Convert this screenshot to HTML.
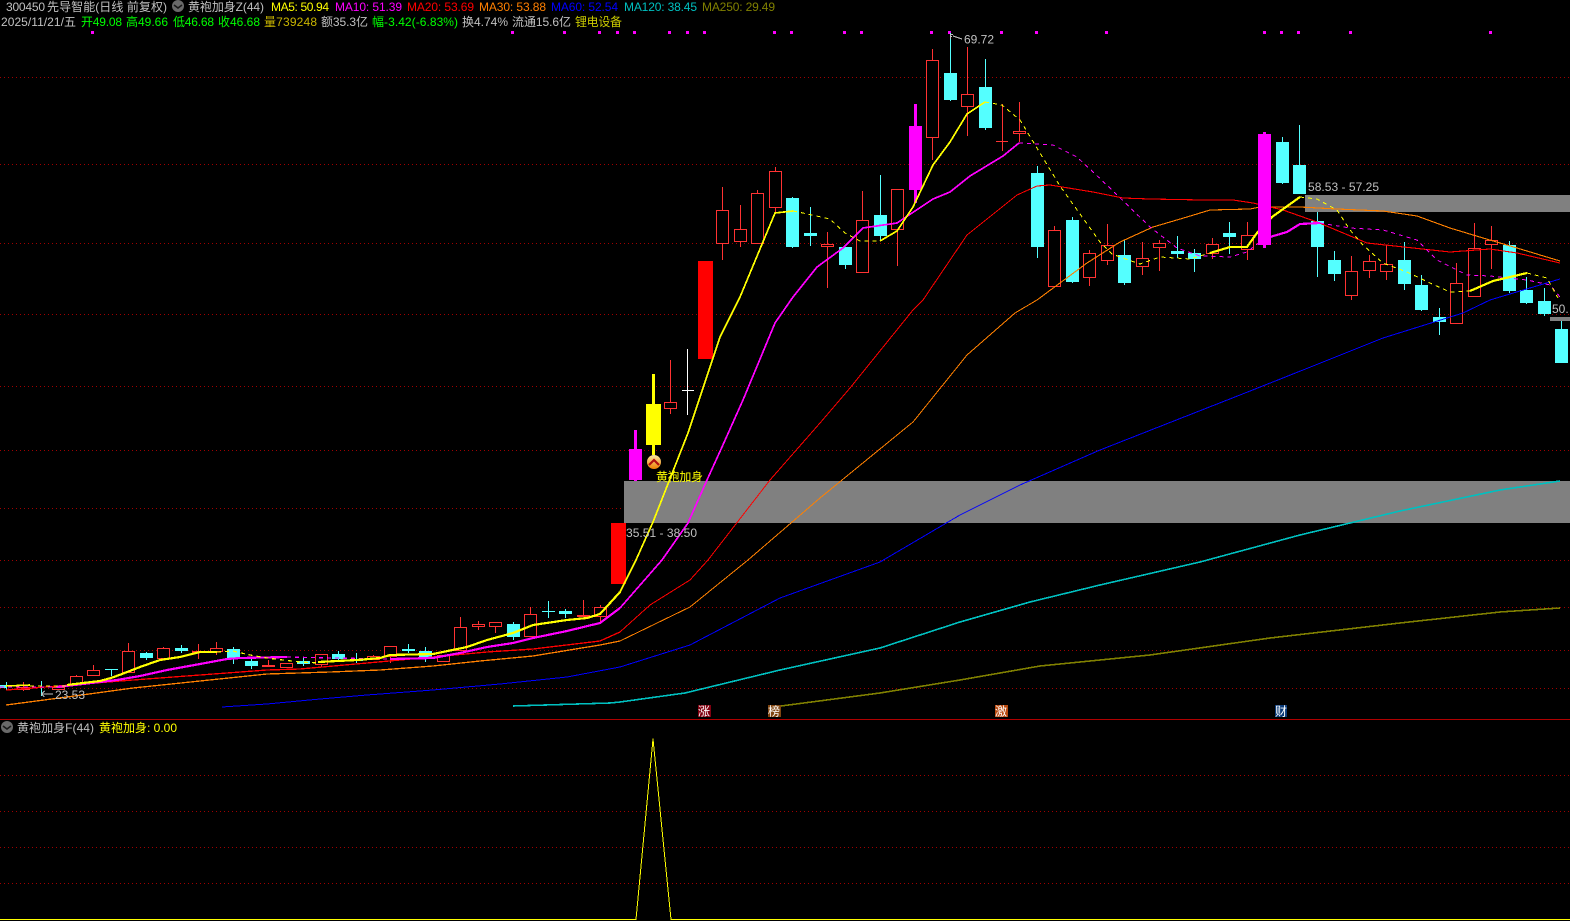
<!DOCTYPE html>
<html>
<head>
<meta charset="utf-8">
<style>
html,body{margin:0;padding:0;background:#000;width:1570px;height:921px;overflow:hidden}
svg{display:block;position:absolute;left:0;top:0}
text{font-family:"Liberation Sans","WenQuanYi Zen Hei","Noto Sans CJK SC",sans-serif;font-size:12px;fill:#c0c0c0}
.l{fill:none;shape-rendering:crispEdges;stroke-linejoin:round}
</style>
</head>
<body>
<svg width="1570" height="921" viewBox="0 0 1570 921" xmlns="http://www.w3.org/2000/svg">
<defs>
<linearGradient id="g" x1="0" y1="0" x2="0" y2="1"><stop offset="0" stop-color="#f8e8a0"/><stop offset="1" stop-color="#f08000"/></linearGradient>
</defs>
<rect width="1570" height="921" fill="#000"/>

<!-- grid -->
<g stroke="#a00000" stroke-width="1" stroke-dasharray="1 3" shape-rendering="crispEdges">
<path d="M0 77.5H1570M0 164.5H1570M0 243.5H1570M0 314.5H1570M0 386.5H1570M0 450.5H1570M0 508.5H1570M0 560.5H1570M0 607.5H1570M0 650.5H1570M0 688.5H1570"/>
<path d="M0 775.5H1570M0 811.5H1570M0 847.5H1570M0 883.5H1570"/>
</g>
<rect x="0" y="719" width="1570" height="1" fill="#b00000"/>

<!-- top magenta dots -->
<g fill="#ff00ff">
<rect x="91" y="31" width="3" height="3"/><rect x="511" y="31" width="3" height="3"/><rect x="563" y="31" width="3" height="3"/><rect x="598" y="31" width="3" height="3"/><rect x="616" y="31" width="3" height="3"/><rect x="633" y="31" width="3" height="3"/><rect x="668" y="31" width="3" height="3"/><rect x="686" y="31" width="3" height="3"/><rect x="703" y="31" width="3" height="3"/><rect x="773" y="31" width="3" height="3"/><rect x="790" y="31" width="3" height="3"/><rect x="843" y="31" width="3" height="3"/><rect x="860" y="31" width="3" height="3"/><rect x="930" y="31" width="3" height="3"/><rect x="948" y="31" width="3" height="3"/><rect x="1000" y="31" width="3" height="3"/><rect x="1035" y="31" width="3" height="3"/><rect x="1105" y="31" width="3" height="3"/><rect x="1263" y="31" width="3" height="3"/><rect x="1280" y="31" width="3" height="3"/><rect x="1297" y="31" width="3" height="3"/><rect x="1349" y="31" width="3" height="3"/><rect x="1489" y="31" width="3" height="3"/>
</g>

<!-- red hollow candles -->
<path fill="#000" stroke="#ff3232" stroke-width="1" shape-rendering="crispEdges" d="
M17.5 687.5h12v2h-12zM23.5 682V687M23.5 690V691
M52.5 687.5h12v2h-12z
M70.5 676.5h12v8h-12zM76.5 675V676
M87.5 670.5h12v5h-12zM93.5 665V670
M122.5 651.5h12v21h-12zM128.5 643V651
M157.5 648.5h12v10h-12zM163.5 647V648
M192.5 651.5h12v1h-12zM198.5 644V651M198.5 653V659
M210.5 648.5h12v3h-12zM216.5 642V648M216.5 652V655
M262.5 665.5h12v1h-12zM268.5 660V665
M280.5 663.5h12v4h-12z
M315.5 654.5h12v10h-12zM321.5 665V667
M367.5 656.5h12v3h-12zM373.5 655V656
M384.5 646.5h12v10h-12zM390.5 657V663
M437.5 655.5h12v6h-12z
M454.5 627.5h12v23h-12zM460.5 617V627
M472.5 624.5h12v2h-12zM478.5 621V624M478.5 627V630
M489.5 622.5h12v4h-12zM495.5 627V633
M524.5 614.5h12v22h-12zM530.5 607V614
M577.5 615.5h12v1h-12zM583.5 600V615
M594.5 607.5h12v9h-12zM600.5 605V607M600.5 617V622
M664.5 402.5h12v6h-12zM670.5 360V402M670.5 409V414
M716.5 210.5h12v33h-12zM722.5 187V210M722.5 244V260
M734.5 229.5h12v12h-12zM740.5 205V229M740.5 242V247
M751.5 193.5h12v50h-12zM757.5 190V193
M769.5 171.5h12v36h-12zM775.5 167V171M775.5 208V213
M821.5 244.5h12v2h-12zM827.5 232V244M827.5 247V288
M856.5 220.5h12v52h-12zM862.5 191V220
M891.5 189.5h12v40h-12zM897.5 230V266
M926.5 60.5h12v77h-12zM932.5 49V60M932.5 138V160
M961.5 94.5h12v12h-12zM967.5 47V94M967.5 107V136
M996 141.5h12M1002.5 104V151
M1013.5 131.5h12v2h-12zM1019.5 102V131M1019.5 134V142
M1048.5 230.5h12v56h-12zM1054.5 226V230
M1083.5 253.5h12v24h-12zM1089.5 250V253M1089.5 278V286
M1101.5 245.5h12v15h-12zM1107.5 224V245M1107.5 261V265
M1136.5 258.5h12v8h-12zM1142.5 242V258M1142.5 267V275
M1153.5 243.5h12v4h-12zM1159.5 240V243M1159.5 248V271
M1206.5 244.5h12v9h-12zM1212.5 238V244M1212.5 254V259
M1241.5 235.5h12v14h-12zM1247.5 222V235M1247.5 250V260
M1345.5 271.5h12v24h-12zM1351.5 256V271M1351.5 296V300
M1363.5 261.5h12v9h-12zM1369.5 255V261M1369.5 271V278
M1380.5 264.5h12v7h-12zM1386.5 245V264M1386.5 272V280
M1450.5 283.5h12v40h-12zM1456.5 263V283
M1468.5 248.5h12v48h-12zM1474.5 223V248
M1485.5 240.5h12v4h-12zM1491.5 226V240M1491.5 245V269
"/>

<!-- cyan candles -->
<path fill="#54ffff" stroke="#54ffff" stroke-width="1" shape-rendering="crispEdges" d="
M0.5 685.5h6v2h-6zM6.5 682V690
M41.5 681V696
M105 669.5h13M111.5 669V676
M140.5 653.5h12v4h-12zM146.5 652V660
M175.5 648.5h12v2h-12zM181.5 645V653
M227.5 649.5h12v8h-12zM233.5 647V664
M245.5 661.5h12v4h-12zM251.5 659V669
M297.5 661.5h12v2h-12zM303.5 657V666
M332.5 654.5h12v4h-12zM338.5 651V662
M350.5 659.5h12v1h-12zM356.5 653V663
M402.5 649.5h12v1h-12zM408.5 644V653
M419.5 651.5h12v5h-12zM425.5 647V662
M507.5 624.5h12v12h-12zM513.5 622V640
M542 611.5h13M548.5 601V618
M559.5 611.5h12v2h-12zM565.5 609V618
M786.5 198.5h12v48h-12zM792.5 197V248
M804.5 233.5h12v2h-12zM810.5 207V246
M839.5 247.5h12v17h-12zM845.5 265V269
M874.5 215.5h12v20h-12zM880.5 175V240
M944.5 73.5h12v26h-12zM950.5 33V101
M979.5 87.5h12v40h-12zM985.5 59V130
M1031.5 173.5h12v73h-12zM1037.5 166V258
M1066.5 220.5h12v61h-12zM1072.5 217V283
M1118.5 255.5h12v27h-12zM1124.5 240V285
M1171.5 251.5h12v2h-12zM1177.5 236V258
M1188.5 253.5h12v5h-12zM1194.5 249V272
M1223.5 233.5h12v3h-12zM1229.5 222V254
M1276.5 142.5h12v40h-12zM1282.5 137V184
M1293.5 165.5h12v28h-12zM1299.5 125V194
M1311.5 221.5h12v25h-12zM1317.5 212V277
M1328.5 260.5h12v13h-12zM1334.5 251V281
M1398.5 260.5h12v23h-12zM1404.5 242V290
M1415.5 285.5h12v24h-12zM1421.5 275V311
M1433.5 317.5h12v4h-12zM1439.5 308V335
M1503.5 245.5h12v45h-12zM1509.5 241V293
M1520.5 290.5h12v12h-12zM1526.5 277V304
M1538.5 301.5h12v12h-12zM1544.5 288V316
M1555.5 329.5h12v33h-12zM1561.5 321V329
"/>

<!-- solid candles -->
<rect x="611" y="523" width="15" height="61" fill="#ff0000"/>
<rect x="698" y="261" width="15" height="98" fill="#ff0000"/>
<path d="M687.5 349V415M682 390.5H694" stroke="#fff" fill="none" shape-rendering="crispEdges"/>
<rect x="629" y="449" width="13" height="31" fill="#ff00ff"/><rect x="634" y="430" width="3" height="51" fill="#ff00ff"/>
<rect x="646" y="404" width="15" height="41" fill="#ffff00"/><rect x="652" y="374" width="3" height="81" fill="#ffff00"/>
<rect x="909" y="126" width="13" height="64" fill="#ff00ff"/><rect x="914" y="104" width="3" height="99" fill="#ff00ff"/>

<!-- bands -->
<rect x="624" y="481" width="946" height="42" fill="#808080"/>
<rect x="1305" y="195" width="265" height="17" fill="#808080"/>
<rect x="1550" y="317" width="20" height="4" fill="#808080"/>

<!-- MA250 / MA120 / MA60 -->
<polyline class="l" stroke="#808000" stroke-width="1.6" points="781,706 880,693 960,680 1040,666 1150,655 1270,638 1400,623 1500,612 1560,608"/>
<polyline class="l" stroke="#00c0c0" stroke-width="1.6" points="513,706 610,703 620,702 685,693 780,670 880,648 960,622 1030,602 1100,585 1200,562 1300,535 1400,511 1500,490 1560,481"/>
<polyline class="l" stroke="#0000ff" stroke-width="1" points="222,707 267,704 320,699 367,695 433,690 500,684 567,677 620,667 690,645 780,598 880,562 960,515 1020,485 1100,450 1240,395 1303,370 1383,338 1463,313 1490,300 1560,279"/>

<!-- MA30 -->
<polyline class="l" stroke="#ff8000" stroke-width="1.3" points="6,705 67,697 133,688 200,681 267,674 330,672 380,670 433,666 480,661 533,656 600,645 620,641"/>
<polyline class="l" stroke="#ff8000" stroke-width="1" points="620,641 690,607 748,560 820,498 913,422 967,355 1015,313 1037,300"/>
<polyline class="l" stroke="#ff8000" stroke-width="1.1" points="1037,300 1087,263 1120,242 1153,227 1187,217 1210,210 1250,209 1260,207 1300,207 1337,209 1383,211 1417,216 1450,228 1483,238 1517,248 1560,261"/>

<!-- MA20 -->
<polyline class="l" stroke="#ff0000" stroke-width="1.3" points="6,690 33,688 133,680 200,675 267,670 300,669 367,663 433,657 487,652 533,649 600,641 620,632"/>
<polyline class="l" stroke="#ff0000" stroke-width="1" points="620,632 650,605 690,580 708,560 770,480 820,423 850,388 913,310 923,300 967,235 1017,195 1037,186"/>
<polyline class="l" stroke="#ff0000" stroke-width="1.1" points="1037,186 1050,185 1093,192 1123,198 1150,199 1203,200 1233,200 1253,203 1283,210 1317,222 1367,243 1450,252 1490,249 1517,253 1560,263"/>

<!-- MA10 -->
<g stroke="#ff00ff">
<polyline class="l" stroke-width="1.2" stroke-dasharray="4 4" points="0,687 57,687"/>
<polyline class="l" stroke-width="2.2" points="57,687 83,684 117,680 140,676 167,670 200,664 227,659 240,658 287,657"/>
<polyline class="l" stroke-width="1.2" stroke-dasharray="4 4" points="287,657 335,658 390,659"/>
<polyline class="l" stroke-width="2.2" points="390,659 433,658 460,653 487,647 513,643 533,638 567,631 600,623 620,608"/>
<polyline class="l" stroke-width="1.7" points="620,608 662,560 688,523 707,480 722,447 743,400 775,323 793,297 817,267 843,248 863,228 897,223 933,199 950,192 970,176 1003,156 1019,143"/>
<polyline class="l" stroke-width="1" stroke-dasharray="4 4" points="1019,143 1053,145 1077,157 1110,188 1150,227 1177,248 1200,256 1230,257 1247,252 1260,242"/>
<polyline class="l" stroke-width="2.2" points="1260,242 1270,237 1287,232 1300,224 1320,223"/>
<polyline class="l" stroke-width="1" stroke-dasharray="4 4" points="1320,223 1350,228 1383,230 1417,240 1437,260 1467,275 1490,276 1527,280 1550,285 1560,297"/>
</g>

<!-- MA5 -->
<g stroke="#ffff00">
<polyline class="l" stroke-width="1.6" points="6,686 30,685"/>
<polyline class="l" stroke-width="1.2" stroke-dasharray="4 4" points="30,686 67,686"/>
<polyline class="l" stroke-width="2.2" points="67,685 83,683 100,681 111,678 122,674 140,667 160,660 180,657 200,652 217,652"/>
<polyline class="l" stroke-width="1.2" stroke-dasharray="4 4" points="217,652 233,651 250,655 267,658 283,660 300,662 320,663"/>
<polyline class="l" stroke-width="2.2" points="318,662 357,660 380,658 390,655 433,654 467,647 487,640 513,633 533,625 567,620 587,618 600,614 620,592"/>
<polyline class="l" stroke-width="1.7" points="620,592 636,560 653,522 688,433 720,337 740,297 775,213 793,211"/>
<polyline class="l" stroke-width="1" stroke-dasharray="4 4" points="793,211 803,213 830,219 845,233 860,241 880,241"/>
<polyline class="l" stroke-width="1.7" points="880,241 897,231 913,207 933,165 950,142 967,114 985,102"/>
<polyline class="l" stroke-width="1" stroke-dasharray="4 4" points="985,102 1002,105 1020,120 1040,153 1060,186 1100,242 1112,254 1120,257 1140,264 1160,257 1190,259 1210,253"/>
<polyline class="l" stroke-width="2.2" points="1210,253 1230,247 1247,247 1257,233 1272,217 1300,197"/>
<polyline class="l" stroke-width="1" stroke-dasharray="4 4" points="1300,197 1317,199 1337,210 1350,230 1363,245 1383,263 1407,272 1430,283 1450,292 1470,291"/>
<polyline class="l" stroke-width="2.2" points="1470,291 1493,281 1527,273"/>
<polyline class="l" stroke-width="1" stroke-dasharray="4 4" points="1527,273 1547,278 1558,298"/>
</g>

<!-- magenta tall candle on top of lines -->
<rect x="1258" y="134" width="13" height="111" fill="#ff00ff"/><rect x="1263" y="132" width="3" height="116" fill="#ff00ff"/>

<!-- signal icon -->
<circle cx="654" cy="462" r="7" fill="url(#g)"/>
<path d="M649 465l5-5 5 5" fill="none" stroke="#b01010" stroke-width="2.2"/>

<!-- sub chart line -->
<polyline class="l" stroke="#ffff00" stroke-width="1" points="0,919.5 636,919.5 653,739 671,919.5 1570,919.5"/>

<!-- tags -->
<rect x="698" y="705" width="13" height="12" fill="#800010"/>
<rect x="768" y="705" width="13" height="12" fill="#804510"/>
<rect x="995" y="705" width="13" height="12" fill="#b84a10"/>
<rect x="1275" y="705" width="12" height="12" fill="#0a3a78"/>
<text x="698" y="715.5" style="fill:#fff" textLength="13">涨</text>
<text x="768" y="715.5" style="fill:#fff" textLength="13">榜</text>
<text x="995" y="715.5" style="fill:#fff" textLength="13">激</text>
<text x="1275" y="715.5" style="fill:#fff" textLength="12">财</text>

<!-- chart labels -->
<path d="M950.5 34V39M950.5 34.5H953M950.5 36.5H952M953 36l9 3" fill="none" stroke="#c0c0c0" shape-rendering="crispEdges"/>
<text x="964" y="43.5" textLength="30">69.72</text>
<path d="M41.5 694H53M41.5 694l3-3M41.5 694l3 3" fill="none" stroke="#c0c0c0" shape-rendering="crispEdges"/>
<text x="55" y="699" textLength="30">23.53</text>
<text x="626" y="537" textLength="71">35.51 - 38.50</text>
<text x="1308" y="191" textLength="71">58.53 - 57.25</text>
<text x="1552" y="313">50.</text>
<text x="656" y="481" style="fill:#ffff00" textLength="47">黄袍加身</text>

<!-- header row 1 -->
<text x="6" y="11" textLength="39">300450</text>
<text x="47" y="11" textLength="120">先导智能(日线 前复权)</text>
<circle cx="178" cy="6" r="6" fill="#6a6a6a"/>
<path d="M174 5l4 3 4-3" fill="none" stroke="#1a1a1a" stroke-width="1.6"/>
<text x="188" y="11" textLength="76">黄袍加身Z(44)</text>
<text x="271" y="11" style="fill:#ffff00" textLength="58">MA5: 50.94</text>
<text x="335" y="11" style="fill:#ff00ff" textLength="67">MA10: 51.39</text>
<text x="407" y="11" style="fill:#ff0000" textLength="67">MA20: 53.69</text>
<text x="479" y="11" style="fill:#ff8000" textLength="67">MA30: 53.88</text>
<text x="551" y="11" style="fill:#0000ff" textLength="67">MA60: 52.54</text>
<text x="624" y="11" style="fill:#00c0c0" textLength="73">MA120: 38.45</text>
<text x="702" y="11" style="fill:#808000" textLength="73">MA250: 29.49</text>

<!-- header row 2 -->
<text x="1" y="26" textLength="75">2025/11/21/五</text>
<text x="81" y="26" style="fill:#00ff00" textLength="41">开49.08</text>
<text x="126" y="26" style="fill:#00ff00" textLength="42">高49.66</text>
<text x="173" y="26" style="fill:#00ff00" textLength="41">低46.68</text>
<text x="218" y="26" style="fill:#00ff00" textLength="42">收46.68</text>
<text x="264" y="26" style="fill:#c8b400" textLength="53">量739248</text>
<text x="321" y="26" textLength="47">额35.3亿</text>
<text x="372" y="26" style="fill:#00ff00" textLength="86">幅-3.42(-6.83%)</text>
<text x="462" y="26" textLength="46">换4.74%</text>
<text x="512" y="26" textLength="59">流通15.6亿</text>
<text x="575" y="26" style="fill:#c8c800" textLength="47">锂电设备</text>

<!-- sub header -->
<circle cx="7" cy="727" r="6" fill="#6a6a6a"/>
<path d="M3 726l4 3 4-3" fill="none" stroke="#1a1a1a" stroke-width="1.6"/>
<text x="17" y="732" textLength="77">黄袍加身F(44)</text>
<text x="99" y="732" style="fill:#ffff00" textLength="78">黄袍加身: 0.00</text>
</svg>
</body>
</html>
